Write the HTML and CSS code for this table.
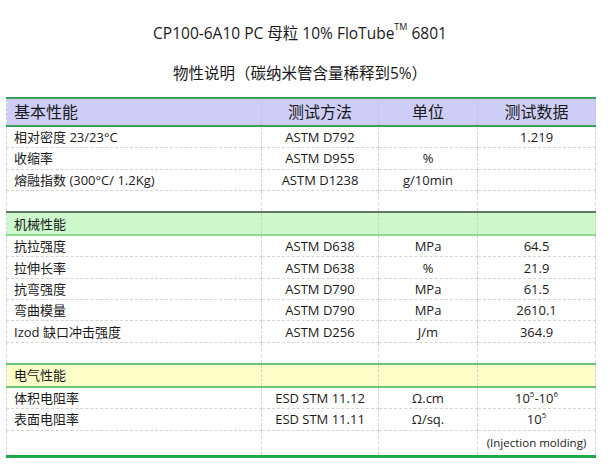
FILE: index.html
```html
<!DOCTYPE html>
<html lang="zh">
<head>
<meta charset="utf-8">
<link rel="stylesheet" href="styles.css">
</head>
<body>
<div class="page">
  <h1 class="title">CP100-6A10 PC 母粒 10% FloTube<sup>TM</sup> 6801</h1>
  <h2 class="subtitle">物性说明（碳纳米管含量稀释到5%）</h2>
  <table class="spec">
    <colgroup>
      <col class="c1"><col class="c2"><col class="c3"><col class="c4">
    </colgroup>
    <thead>
      <tr class="head">
        <th class="name">基本性能</th><th>测试方法</th><th>单位</th><th>测试数据</th>
      </tr>
    </thead>
    <tbody>
      <tr><td class="name">相对密度 23/23°C</td><td>ASTM D792</td><td></td><td>1.219</td></tr>
      <tr><td class="name">收缩率</td><td>ASTM D955</td><td>%</td><td></td></tr>
      <tr><td class="name">熔融指数 (300°C/ 1.2Kg)</td><td>ASTM D1238</td><td>g/10min</td><td></td></tr>
      <tr class="blank"><td></td><td></td><td></td><td></td></tr>
      <tr class="sec green"><td class="name">机械性能</td><td></td><td></td><td></td></tr>
      <tr><td class="name">抗拉强度</td><td>ASTM D638</td><td>MPa</td><td>64.5</td></tr>
      <tr><td class="name">拉伸长率</td><td>ASTM D638</td><td>%</td><td>21.9</td></tr>
      <tr><td class="name">抗弯强度</td><td>ASTM D790</td><td>MPa</td><td>61.5</td></tr>
      <tr><td class="name">弯曲模量</td><td>ASTM D790</td><td>MPa</td><td>2610.1</td></tr>
      <tr><td class="name">Izod 缺口冲击强度</td><td>ASTM D256</td><td>J/m</td><td>364.9</td></tr>
      <tr class="blank"><td></td><td></td><td></td><td></td></tr>
      <tr class="sec yellow"><td class="name">电气性能</td><td></td><td></td><td></td></tr>
      <tr><td class="name">体积电阻率</td><td>ESD STM 11.12</td><td>Ω.cm</td><td>10<sup>5</sup>-10<sup>6</sup></td></tr>
      <tr><td class="name">表面电阻率</td><td>ESD STM 11.11</td><td>Ω/sq.</td><td>10<sup>5</sup></td></tr>
      <tr class="last"><td></td><td></td><td></td><td class="note">(Injection molding)</td></tr>
    </tbody>
  </table>
</div>
</body>
</html>
```

FILE: styles.css
```css
html, body {
  margin: 0;
  padding: 0;
  background: #ffffff;
}
body {
  font-family: "Open Sans", "Noto Sans CJK SC", sans-serif;
  color: #1a1a1a;
}
.page {
  width: 610px;
  padding: 22px 0 0 6px;
  box-sizing: border-box;
}
.title {
  margin: 0;
  width: 588px;
  text-align: center;
  font-size: 15.5px;
  font-weight: normal;
  line-height: 22px;
}
.title sup {
  font-size: 9px;
  vertical-align: top;
  line-height: 10px;
}
.subtitle {
  margin: 18px 0 0 0;
  width: 588px;
  text-align: center;
  font-size: 15.5px;
  font-weight: normal;
  line-height: 22px;
}
.spec {
  margin-top: 13px;
  width: 589px;
  border-collapse: collapse;
  table-layout: fixed;
  font-size: 13px;
}
.c1 { width: 255px; }
.c2 { width: 117px; }
.c3 { width: 99px; }
.c4 { width: 118px; }
.spec th, .spec td {
  border: 1px dashed #d4d4d4;
  padding: 0;
  height: 20.3px;
  text-align: center;
  white-space: nowrap;
  font-weight: normal;
  line-height: 18px;
}
.spec .name {
  text-align: left;
  padding-left: 7px;
}
.head th {
  background: #cdcdf7;
  height: 26px;
  font-size: 16px;
  border-top: 2px solid #3aa060;
  border-bottom: 2px solid #3aa060;
  border-left: 1px dashed #c4c4e4;
  border-right: 1px dashed #c4c4e4;
}
.sec td {
  height: 21px;
}
.green td {
  background: #ccf8cc;
  border-top: 2px solid #5e7a62;
  border-bottom: 2px solid #8fdc8f;
}
.yellow td {
  background: #fdfdc8;
  border-top: 2px solid #6cc47a;
  border-bottom: 2px solid #6cc47a;
}
.last td {
  height: 24px;
  border-bottom: 3px solid #1fa84a;
}
.note {
  font-size: 11.5px;
}
.spec td sup {
  font-size: 8px;
  vertical-align: top;
  line-height: 10px;
}
```
